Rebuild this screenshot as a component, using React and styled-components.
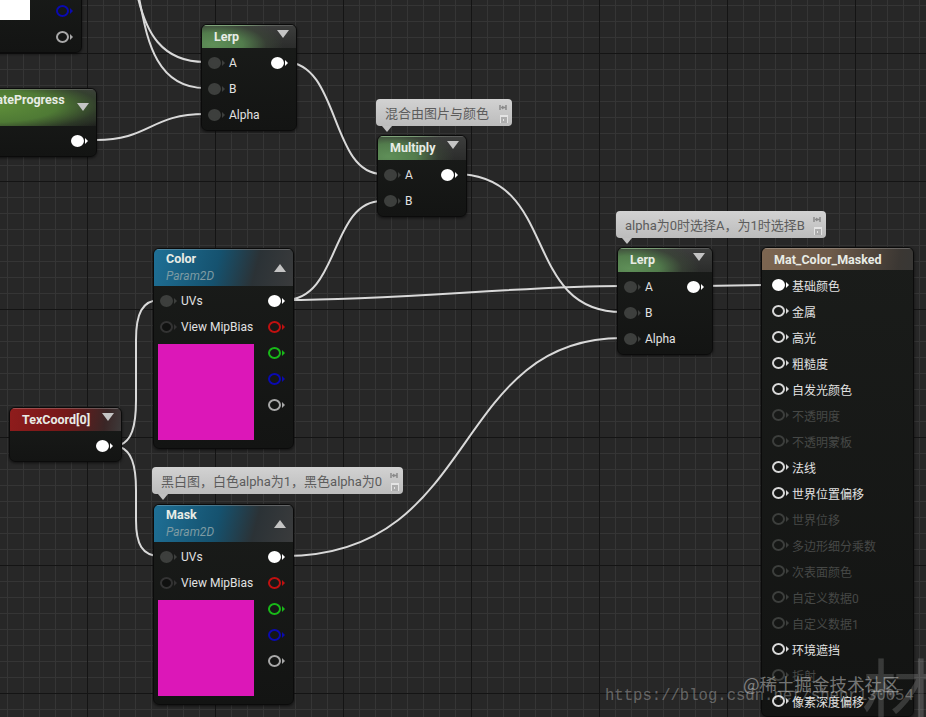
import React from "react";
import styled, { createGlobalStyle } from "styled-components";

const GlobalStyle = createGlobalStyle`
  html, body { margin: 0; padding: 0; background: #272727; }
  body { font-family: Roboto, "Noto Sans CJK SC", sans-serif; }
`;

const Canvas = styled.div`
  position: relative;
  width: 926px;
  height: 717px;
  overflow: hidden;
  background-color: #272727;
  background-image:
    linear-gradient(#141414 1px, transparent 1px),
    linear-gradient(90deg, #141414 1px, transparent 1px),
    linear-gradient(#353535 1px, transparent 1px),
    linear-gradient(90deg, #353535 1px, transparent 1px);
  background-size: 128px 128px, 128px 128px, 16px 16px, 16px 16px;
  background-position: 0 53px, 87px 0, 0 5px, 7px 0;
`;

const Wires = styled.svg`
  position: absolute;
  inset: 0;
  path {
    fill: none;
    stroke: #d9d9d9;
    stroke-width: 2;
  }
`;

const NodeBox = styled.div`
  position: absolute;
  left: ${(p) => p.$x}px;
  top: ${(p) => p.$y}px;
  width: ${(p) => p.$w}px;
  box-sizing: border-box;
  display: flex;
  flex-direction: column;
  border: 1px solid #0b0b0b;
  border-radius: 6px;
  background: linear-gradient(#1a1c1a, #131413);
  box-shadow: 0 1px 3px rgba(0, 0, 0, 0.6);
  overflow: hidden;
`;

const headerTints = {
  green: "radial-gradient(ellipse 75% 130% at 12% 85%, #5f8f58 0%, #527c4c 42%, rgba(60, 72, 56, 0.6) 75%, rgba(60, 60, 60, 0) 100%), linear-gradient(#3c3d3c, #2b2c2b)",
  lime: "radial-gradient(ellipse 90% 90% at 30% 45%, #5f8f3a 0%, #4f7a35 50%, rgba(50, 66, 42, 0.7) 80%, rgba(50, 50, 50, 0) 100%), linear-gradient(#3f403f, #1d1e1d)",
  blue: "linear-gradient(105deg, #1f7096 0%, #15526f 45%, #2b3236 72%, #3a3b3c 100%)",
  red: "linear-gradient(100deg, #8f1c1c 0%, #741818 50%, #3a2626 85%, #3d3a3a 100%)",
  brown: "linear-gradient(100deg, #7d6651 0%, #6d5a49 45%, #3b3733 90%, #383735 100%)",
};

const Header = styled.div`
  height: ${(p) => p.$h}px;
  flex: none;
  box-sizing: border-box;
  display: flex;
  align-items: ${(p) => (p.$top ? "flex-start" : "center")};
  justify-content: space-between;
  gap: 6px;
  padding: ${(p) => (p.$top ? "3px" : "0")} 7px ${(p) => (p.$h >= 24 && !p.$top ? "2px" : "0")} ${(p) => p.$left}px;
  background: ${(p) => headerTints[p.$tint]};
  border-top: 1px solid rgba(255, 255, 255, 0.22);
`;

const Titles = styled.div`
  display: flex;
  flex-direction: column;
  gap: 3px;
  white-space: nowrap;
`;

const Title = styled.span`
  font-size: 12.5px;
  line-height: 14px;
  font-weight: 700;
  color: #e8ece6;
`;

const SubTitle = styled.span`
  font-size: 12px;
  line-height: 14px;
  font-style: italic;
  color: #7d9ba3;
`;

const Chevron = styled.i`
  flex: none;
  width: 0;
  height: 0;
  border-left: 6px solid transparent;
  border-right: 6px solid transparent;
  ${(p) => (p.$up ? "border-bottom: 8px solid #c4c4c4;" : "border-top: 8px solid #c4c4c4;")}
  ${(p) => (p.$up ? "margin-top: 2px;" : "margin-top: -6px;")}
  ${(p) => p.$drop && "margin-top: 10px;"}
`;

const Body = styled.div`
  display: flex;
  justify-content: space-between;
  padding: 2px 9px 2px ${(p) => p.$inset}px;
`;

const Column = styled.div`
  display: flex;
  flex-direction: column;
`;

const Row = styled.div`
  height: 26px;
  display: flex;
  align-items: center;
  gap: ${(p) => p.$gap ?? 5}px;
  white-space: nowrap;
  font-size: 12px;
  color: ${(p) => (p.$dim ? "#464846" : "#e2e2e2")};
`;

const pinStyles = {
  input: "background: #3d3f3d; border-color: #3d3f3d;",
  output: "background: #fff; border-color: #fff;",
  white: "border-color: #d8d8d8;",
  mute: "border-color: #3c3e3c;",
  off: "border-color: #333; background: #101110;",
  red: "border-color: #c01010;",
  green: "border-color: #18b818;",
  blue: "border-color: #0a0ab0;",
  gray: "border-color: #a8a8a8;",
};

const Pin = styled.span`
  position: relative;
  flex: none;
  box-sizing: border-box;
  width: 13px;
  height: 12px;
  border: 2px solid;
  border-radius: 50%;
  margin-right: 3px;
  ${(p) => pinStyles[p.$kind]}
  &::after {
    content: "";
    position: absolute;
    top: 1px;
    right: -6px;
    border-top: 3px solid transparent;
    border-bottom: 3px solid transparent;
    border-left: 3px solid;
    border-left-color: inherit;
  }
`;

const Swatch = styled.div`
  width: 96px;
  height: 96px;
  margin: 4px 0 6px -2px;
  background: ${(p) => p.$color};
`;

const WhiteTile = styled.div`
  width: 30px;
  height: 22px;
  background: #fff;
  margin-left: -1px;
`;

const CommentBubble = styled.div`
  position: absolute;
  left: ${(p) => p.$x}px;
  top: ${(p) => p.$y}px;
  width: ${(p) => p.$w}px;
  height: 27px;
  box-sizing: border-box;
  display: flex;
  align-items: center;
  justify-content: space-between;
  padding: 0 3px 0 9px;
  border-radius: 4px;
  background: linear-gradient(#d2d2d2, #bcbcbc);
  color: #5c5c5c;
  font-size: 13px;
  white-space: nowrap;
  &::after {
    content: "";
    position: absolute;
    left: 6px;
    bottom: -6px;
    border-left: 5px solid transparent;
    border-right: 5px solid transparent;
    border-top: 6px solid #c0c0c0;
  }
`;

const Watermark = styled.span`
  position: absolute;
  left: ${(p) => p.$x}px;
  top: ${(p) => p.$y}px;
  font-family: ${(p) => p.$font};
  font-size: ${(p) => p.$size}px;
  line-height: 1;
  white-space: nowrap;
  color: rgba(255, 255, 255, ${(p) => p.$alpha});
`;

const BubbleMark = () => (
  <svg width="10" height="22" viewBox="0 0 10 22">
    <path d="M1 3v5M7 3v5M2 5.500h5" stroke="#8a8a8a" strokeWidth="1.500" fill="none" />
    <path d="M3 3.500l3 2-3 2z" fill="#8a8a8a" />
    <rect x="1" y="13" width="8" height="8" fill="#e4e4e4" />
    <path d="M2 16h6M2 18h2M5 18h3M2 20h6" stroke="#777" strokeWidth="1" />
  </svg>
);

const Comment = ({ x, y, w, children }) => (
  <CommentBubble $x={x} $y={y} $w={w}>
    <span>{children}</span>
    <BubbleMark />
  </CommentBubble>
);

const Node = ({ x, y, w, tint, head, title, sub, chevron, titleTop, titleLeft = 12, inset = 6, gap, inputs = [], outputs = [], swatch }) => (
  <NodeBox $x={x} $y={y} $w={w}>
    <Header $h={head} $tint={tint} $top={titleTop} $left={titleLeft}>
      <Titles>
        <Title>{title}</Title>
        {sub && <SubTitle>{sub}</SubTitle>}
      </Titles>
      {chevron && <Chevron $up={chevron === "up"} $drop={titleTop} />}
    </Header>
    <Body $inset={inset}>
      <Column>
        {inputs.map((r, i) => (
          <Row key={i} $dim={r.dim} $gap={gap}>
            <Pin $kind={r.pin} />
            {r.label}
          </Row>
        ))}
        {swatch && <Swatch $color={swatch} />}
      </Column>
      <Column>
        {outputs.map((k, i) => (
          <Row key={i}>
            <Pin $kind={k} />
          </Row>
        ))}
      </Column>
    </Body>
  </NodeBox>
);

const lerpInputs = [
  { pin: "input", label: "A" },
  { pin: "input", label: "B" },
  { pin: "input", label: "Alpha" },
];

const textureInputs = [
  { pin: "input", label: "UVs" },
  { pin: "off", label: "View MipBias" },
];

const textureOutputs = ["output", "red", "green", "blue", "gray"];

const matPins = [
  ["基础颜色", "output"],
  ["金属", "white"],
  ["高光", "white"],
  ["粗糙度", "white"],
  ["自发光颜色", "white"],
  ["不透明度", "mute", true],
  ["不透明蒙板", "mute", true],
  ["法线", "white"],
  ["世界位置偏移", "white"],
  ["世界位移", "mute", true],
  ["多边形细分乘数", "mute", true],
  ["次表面颜色", "mute", true],
  ["自定义数据0", "mute", true],
  ["自定义数据1", "mute", true],
  ["环境遮挡", "white"],
  ["折射", "mute", true],
  ["像素深度偏移", "white"],
].map(([label, pin, dim]) => ({ label, pin, dim }));

const wirePaths = [
  "M138 -2 C146 30 160 62 205 62",
  "M139 -2 C146 30 152 88 205 88",
  "M96 140 C150 140 150 114 205 114",
  "M285 62 C340 62 330 174 382 174",
  "M285 300 C340 300 330 201 382 201",
  "M285 300 C400 300 520 286 622 286",
  "M455 174 C560 174 520 312 622 312",
  "M285 556 C480 556 450 338 622 338",
  "M110 446 L120 445 C131 441 136 428 136 400 L136 340 C136 314 142 300 160 300",
  "M110 446 L120 447 C131 451 136 464 136 490 L136 520 C136 544 142 556 160 556",
  "M702 286 L770 285",
];

const BLOG_URL = "https://blog.csdn.net/shenr130054";

export default function App() {
  return (
    <>
      <GlobalStyle />
      <Canvas>
        <Wires width="926" height="717" viewBox="0 0 926 717">
          {wirePaths.map((d) => (
            <path key={d} d={d} />
          ))}
        </Wires>

        <NodeBox $x={-60} $y={-31} $w={142}>
          <Body $inset={60}>
            <Column>
              <Row />
              <WhiteTile />
            </Column>
            <Column>
              <Row />
              <Row>
                <Pin $kind="blue" />
              </Row>
              <Row>
                <Pin $kind="gray" />
              </Row>
            </Column>
          </Body>
        </NodeBox>

        <Node x={201} y={24} w={96} tint="green" head={23} title="Lerp" chevron="down" inputs={lerpInputs} outputs={["output"]} />

        <Node x={-60} y={88} w={157} tint="lime" head={37} title="UpdateProgress" titleTop titleLeft={33} chevron="down" outputs={["output"]} />

        <Comment x={376} y={99} w={136}>混合由图片与颜色</Comment>
        <Node x={377} y={135} w={90} tint="green" head={24} title="Multiply" chevron="down" inputs={lerpInputs.slice(0, 2)} outputs={["output"]} />

        <Node x={153} y={248} w={141} tint="blue" head={37} title="Color" sub="Param2D" chevron="up" inputs={textureInputs} outputs={textureOutputs} swatch="#dc17b8" />

        <Node x={9} y={407} w={113} tint="red" head={23} title="TexCoord[0]" chevron="down" outputs={["output"]} />

        <Comment x={152} y={467} w={251}>黑白图，白色alpha为1，黑色alpha为0</Comment>
        <Node x={153} y={504} w={141} tint="blue" head={37} title="Mask" sub="Param2D" chevron="up" inputs={textureInputs} outputs={textureOutputs} swatch="#dc17b8" />

        <Comment x={616} y={211} w={210}>alpha为0时选择A，为1时选择B</Comment>
        <Node x={617} y={247} w={96} tint="green" head={24} title="Lerp" chevron="down" inputs={lerpInputs} outputs={["output"]} />

        <Node x={761} y={247} w={153} tint="brown" head={22} title="Mat_Color_Masked" inset={10} gap={4} inputs={matPins} />

        <Watermark $x={862} $y={652} $size={72} $alpha={0.16} $font={'"Noto Sans CJK SC", sans-serif'}>材</Watermark>
        <Watermark $x={743} $y={675} $size={17.500} $alpha={0.42} $font={'"Noto Sans CJK SC", sans-serif'}>@稀土掘金技术社区</Watermark>
        <Watermark $x={605} $y={689} $size={15.600} $alpha={0.3} $font={'"Liberation Mono", monospace'}>{BLOG_URL}</Watermark>
      </Canvas>
    </>
  );
}
